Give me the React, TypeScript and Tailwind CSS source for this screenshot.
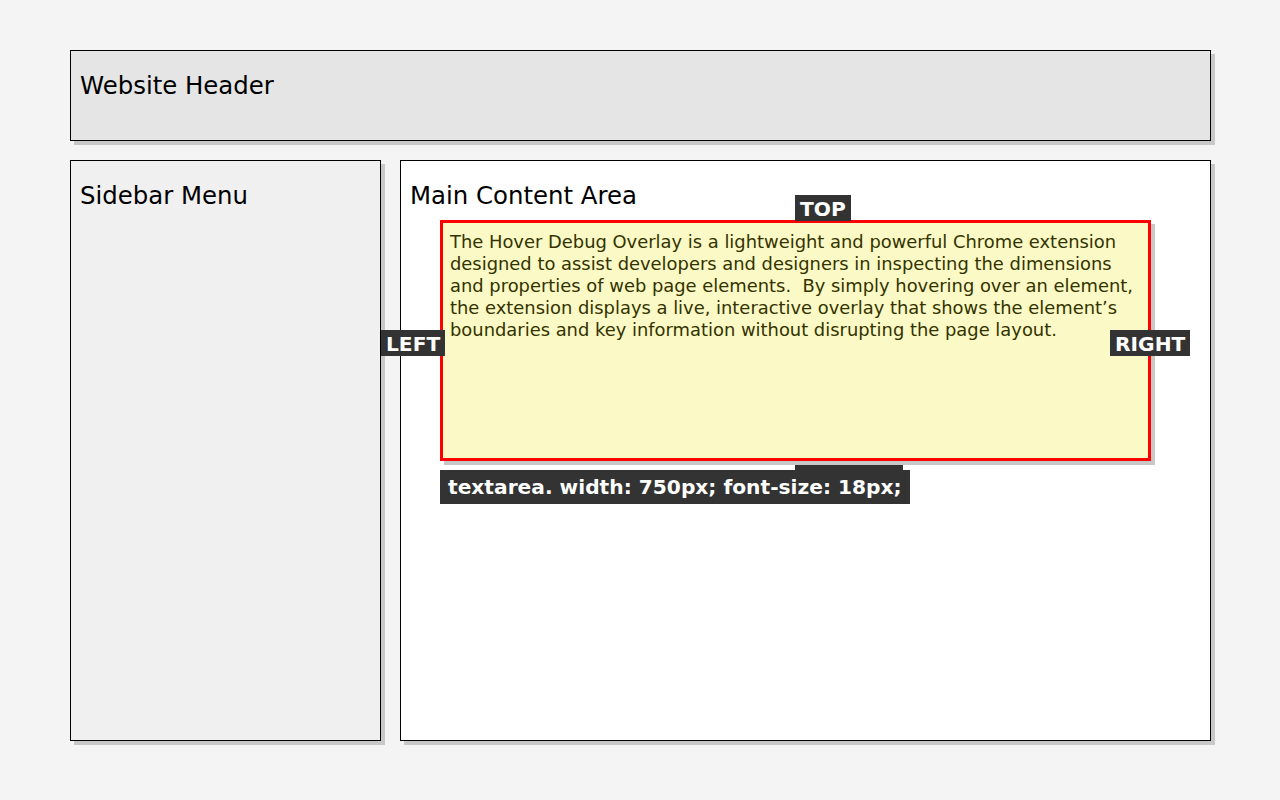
const font = { fontFamily: '"DejaVu Sans", Verdana, sans-serif' };

const lines = [
  "The Hover Debug Overlay is a lightweight and powerful Chrome extension",
  "designed to assist developers and designers in inspecting the dimensions",
  "and properties of web page elements.  By simply hovering over an element,",
  "the extension displays a live, interactive overlay that shows the element\u2019s",
  "boundaries and key information without disrupting the page layout.",
];

const Tag = ({ className, children }: any) => (
  <div className={`absolute bg-[#333333] text-white font-bold text-[20.2px] leading-[24px] pt-[2px] px-[5px] whitespace-nowrap ${className}`}>
    {children}
  </div>
);

const Panel = ({ className, title }: any) => (
  <div className={`border border-black shadow-[4px_4px_0_#c8c8c8] px-[9px] pt-[21px] ${className}`}>
    <h2 className="text-[24.4px] leading-[28px] text-black">{title}</h2>
  </div>
);

export default function App() {
  return (
    <div className="w-[1280px] h-[800px] bg-[#f4f4f4] px-[70px] pt-[50px] flex flex-col gap-[19px]" style={font}>
      <Panel className="h-[91px] w-[1141px] bg-[#e5e5e5]" title="Website Header" />
      <div className="flex gap-[19px] h-[581px] w-[1141px]">
        <Panel className="w-[311px] bg-[#f0f0f0]" title="Sidebar Menu" />
        <div className="relative flex-1 border border-black bg-white shadow-[4px_4px_0_#c8c8c8] px-[9px] pt-[21px]">
          <h2 className="text-[24.4px] leading-[28px] text-black">Main Content Area</h2>
          <div className="mt-[10px] ml-[30px] w-[711px] h-[241px] border-[3px] border-[#ff0000] bg-[#fbf9c5] shadow-[4px_4px_0_#c8c8c8] px-[7px] pt-[8px] text-[#333300] text-[17.9px] leading-[22px] whitespace-pre">
            {lines.map((l) => (
              <div key={l}>{l}</div>
            ))}
          </div>
          <Tag className="left-[394px] top-[34px]">TOP</Tag>
          <Tag className="left-[-20px] top-[169px]">LEFT</Tag>
          <Tag className="left-[709px] top-[169px]">RIGHT</Tag>
          <Tag className="left-[394px] top-[304px]">BOTTOM</Tag>
          <div className="absolute left-[39px] top-[309px] h-[34px] bg-[#333333] text-white font-bold text-[20.2px] leading-[34px] px-[8px] whitespace-nowrap">
            textarea. width: 750px; font-size: 18px;
          </div>
        </div>
      </div>
    </div>
  );
}
